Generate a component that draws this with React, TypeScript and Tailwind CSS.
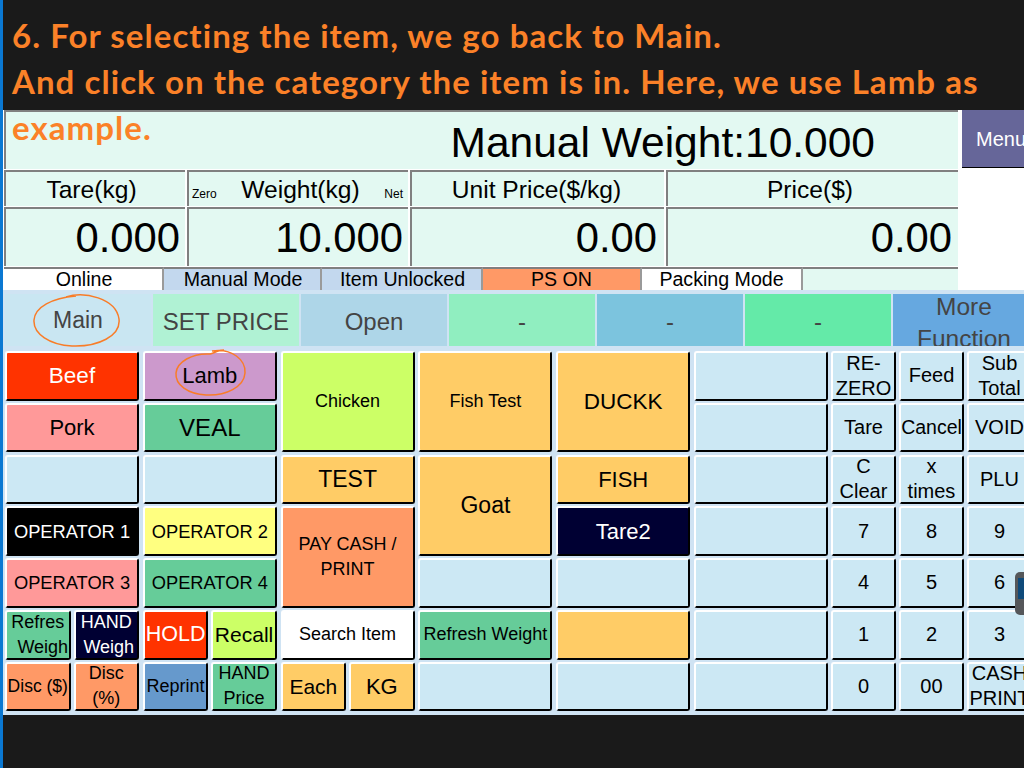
const FONT = "font-['Liberation_Sans',Arial,sans-serif]";

type Key = {
  label?: string;
  color: string;
  size?: string;
  span?: boolean;
};

const blank: Key = { color: 'bg-[#cce8f4]' };

const statusCells = [
  { label: 'Online', className: 'w-[160px] bg-white pl-[2px]' },
  { label: 'Manual Mode', className: 'w-[158px] bg-[#c3d8ee] pl-[2px]' },
  { label: 'Item Unlocked', className: 'w-[161px] bg-[#c3d8ee] pl-[2px]' },
  { label: 'PS ON', className: 'w-[159px] bg-[#ff9966]' },
  { label: 'Packing Mode', className: 'w-[161px] bg-white' },
  { label: '', className: 'w-[155px] bg-[#e3f9f2]' },
];

const functionKeys = [
  { label: 'Main', color: 'bg-[#c9e6f2]', size: 'text-[23px]' },
  { label: 'SET PRICE', color: 'bg-[#b0f2d4]', size: 'text-[24px] pt-[3px]' },
  { label: 'Open', color: 'bg-[#aed6e8]', size: 'text-[24px] pt-[3px]' },
  { label: '-', color: 'bg-[#90eec0]', size: 'text-[24px] pt-[3px]' },
  { label: '-', color: 'bg-[#7cc4de]', size: 'text-[24px] pt-[3px]' },
  { label: '-', color: 'bg-[#64eaa8]', size: 'text-[24px] pt-[3px]' },
];

const numberKeys: Key[] = [
  { label: 'RE-\nZERO', color: 'bg-[#cce8f4]' },
  { label: 'Feed', color: 'bg-[#cce8f4]' },
  { label: 'Sub\nTotal', color: 'bg-[#cce8f4]' },
  { label: 'Tare', color: 'bg-[#cce8f4]' },
  { label: 'Cancel', color: 'bg-[#cce8f4]', size: 'text-[19.5px]' },
  { label: 'VOID', color: 'bg-[#cce8f4]' },
  { label: 'C\nClear', color: 'bg-[#cce8f4]' },
  { label: 'x\ntimes', color: 'bg-[#cce8f4]' },
  { label: 'PLU', color: 'bg-[#cce8f4]' },
  ...['7', '8', '9', '4', '5', '6', '1', '2', '3', '0', '00'].map((label) => ({
    label,
    color: 'bg-[#cce8f4]',
  })),
  { label: 'CASH\nPRINT', color: 'bg-[#cce8f4]' },
];

const PadKey = ({ label, color, size = 'text-[20px]', span }: Key) => (
  <button
    type="button"
    className={`flex min-w-0 items-center justify-center overflow-hidden whitespace-pre rounded-[3px] border-2 border-t-white border-l-white border-r-black border-b-black text-center leading-[25px] ${color} ${size} ${
      span ? 'row-span-2' : ''
    }`}
  >
    {label}
  </button>
);

const KeyPair = ({ keys }: { keys: [Key, Key] }) => (
  <div className="grid grid-cols-2 gap-x-[3px]">
    <PadKey {...keys[0]} />
    <PadKey {...keys[1]} />
  </div>
);

const App = () => {
  return (
    <div className={`relative h-[768px] w-[1024px] overflow-hidden bg-[#1a1a1a] pl-[3px] text-black ${FONT}`}>
      {/* blue edge of the slide */}
      <div className="absolute top-0 bottom-0 left-0 w-[3px] bg-[#0a78d2]" />

      <div className="h-[110px]" />

      <div className="w-[1040px] bg-[#cfe3f3]">
        <div className="bg-white pl-px">
          <div className="flex">
            <div className="flex h-[59px] w-[954px] items-center justify-end border-t-2 border-l-2 border-[#808080] bg-[#e3f9f2] pt-[5px] pr-[83px] text-[42.5px] leading-none">
              Manual Weight:10.000
            </div>
            <div className="ml-[4px] flex h-[58px] w-[80px] items-center border-b border-black bg-[#666699] pl-[14px] text-[20px] text-white">
              Menu
            </div>
          </div>

          <div className="mt-px flex h-[36px] w-[954px] gap-[2px] text-[24.6px]">
            <div className="flex w-[181px] items-center justify-center border-t-2 border-l-2 border-[#808080] bg-[#e3f9f2] pt-[2px] pr-[8px]">Tare(kg)</div>
            <div className="flex w-[221px] items-center justify-between border-t-2 border-l-2 border-[#808080] bg-[#e3f9f2] pt-[2px] pr-[5px] pl-[3px]">
              <span className="pt-[8px] text-[12px]">Zero</span>
              <span>Weight(kg)</span>
              <span className="pt-[8px] text-[12px]">Net</span>
            </div>
            <div className="flex w-[254px] items-center justify-center border-t-2 border-l-2 border-[#808080] bg-[#e3f9f2] pt-[2px] pr-[3px]">Unit Price($/kg)</div>
            <div className="flex flex-1 items-center justify-center border-t-2 border-l-2 border-[#808080] bg-[#e3f9f2] pt-[2px] pr-[6px]">Price($)</div>
          </div>

          <div className="mt-px flex h-[59px] w-[954px] gap-[2px] text-[41.8px]">
            <div className="flex w-[181px] items-center justify-end border-t-2 border-l-2 border-[#808080] bg-[#e3f9f2] pt-[2px] pr-[5px]">0.000</div>
            <div className="flex w-[221px] items-center justify-end border-t-2 border-l-2 border-[#808080] bg-[#e3f9f2] pt-[2px] pr-[5px]">10.000</div>
            <div className="flex w-[254px] items-center justify-end border-t-2 border-l-2 border-[#808080] bg-[#e3f9f2] pt-[2px] pr-[7px]">0.00</div>
            <div className="flex flex-1 items-center justify-end border-t-2 border-l-2 border-[#808080] bg-[#e3f9f2] pt-[2px] pr-[6px]">0.00</div>
          </div>

          <div className="mt-px flex h-[23px] w-[954px] text-[19.6px]">
            {statusCells.map((cell, i) => (
              <div
                key={i}
                className={`flex items-center justify-center border-t-2 border-r-2 border-t-[#808080] border-r-[#9a9a9a] pt-px leading-none last:border-r-0 ${cell.className}`}
              >
                {cell.label}
              </div>
            ))}
          </div>
        </div>

        <div className="flex gap-[2px] pt-[4px] pl-[2px]">
          {functionKeys.map((key, i) => (
            <div
              key={i}
              className={`flex h-[52px] w-[146px] items-center justify-center text-[#444444] ${key.color} ${key.size}`}
            >
              {key.label}
            </div>
          ))}
          <div className="h-[52px] w-[146px] overflow-hidden bg-[#66a8e0] text-center text-[24.5px] leading-[32px] text-[#444444]">
            <div className="-mt-[3px] pr-[4px]">
              More
              <br />
              Function
            </div>
          </div>
        </div>

        <div className="flex gap-[3px] pt-[5px] pb-[4px] pl-[2px]">
          <div className="grid grid-cols-[repeat(6,134px)] grid-rows-[repeat(7,49.6px)] gap-x-[3.8px] gap-y-[2.2px]">
            <PadKey label="Beef" color="bg-[#ff3300] text-white" size="text-[22.5px]" />
            <PadKey label="Lamb" color="bg-[#cc99cc]" size="text-[22px]" />
            <PadKey label="Chicken" color="bg-[#ccff66]" size="text-[18px]" span />
            <PadKey label="Fish Test" color="bg-[#ffcc66]" size="text-[18px]" span />
            <PadKey label="DUCKK" color="bg-[#ffcc66]" size="text-[22.5px]" span />
            <PadKey {...blank} />

            <PadKey label="Pork" color="bg-[#ff9999]" size="text-[22px]" />
            <PadKey label="VEAL" color="bg-[#66cc99]" size="text-[24px]" />
            <PadKey {...blank} />

            <PadKey {...blank} />
            <PadKey {...blank} />
            <PadKey label="TEST" color="bg-[#ffcc66]" size="text-[23px]" />
            <PadKey label="Goat" color="bg-[#ffcc66]" size="text-[23px]" span />
            <PadKey label="FISH" color="bg-[#ffcc66]" size="text-[22px]" />
            <PadKey {...blank} />

            <PadKey label="OPERATOR 1" color="bg-black text-white" size="text-[18.3px]" />
            <PadKey label="OPERATOR 2" color="bg-[#ffff80]" size="text-[18.3px]" />
            <PadKey label={'PAY CASH /\nPRINT'} color="bg-[#ff9966]" size="text-[18px]" span />
            <PadKey label="Tare2" color="bg-[#000033] text-white" size="text-[22px]" />
            <PadKey {...blank} />

            <PadKey label="OPERATOR 3" color="bg-[#ff9999]" size="text-[18.3px]" />
            <PadKey label="OPERATOR 4" color="bg-[#66cc99]" size="text-[18.3px]" />
            <PadKey {...blank} />
            <PadKey {...blank} />
            <PadKey {...blank} />

            <KeyPair
              keys={[
                { label: 'Refres\n  Weigh', color: 'bg-[#66cc99]', size: 'text-[18px]' },
                { label: 'HAND\n Weigh', color: 'bg-[#000033] text-white', size: 'text-[18px]' },
              ]}
            />
            <KeyPair
              keys={[
                { label: 'HOLD', color: 'bg-[#ff3300] text-white', size: 'text-[21.5px]' },
                { label: 'Recall', color: 'bg-[#ccff66]', size: 'text-[21px]' },
              ]}
            />
            <PadKey label="Search Item" color="bg-white" size="text-[18px]" />
            <PadKey label="Refresh Weight" color="bg-[#66cc99]" size="text-[18px]" />
            <PadKey color="bg-[#ffcc66]" />
            <PadKey {...blank} />

            <KeyPair
              keys={[
                { label: 'Disc ($)', color: 'bg-[#ff9966]', size: 'text-[17.5px]' },
                { label: 'Disc\n(%)', color: 'bg-[#ff9966]', size: 'text-[18px]' },
              ]}
            />
            <KeyPair
              keys={[
                { label: 'Reprint', color: 'bg-[#6699cc]', size: 'text-[18px]' },
                { label: 'HAND\nPrice', color: 'bg-[#66cc99]', size: 'text-[18px]' },
              ]}
            />
            <KeyPair
              keys={[
                { label: 'Each', color: 'bg-[#ffcc66]', size: 'text-[21px]' },
                { label: 'KG', color: 'bg-[#ffcc66]', size: 'text-[22px]' },
              ]}
            />
            <PadKey {...blank} />
            <PadKey {...blank} />
            <PadKey {...blank} />
          </div>

          <div className="grid grid-cols-[repeat(3,65px)] grid-rows-[repeat(7,49.6px)] gap-x-[3px] gap-y-[2.2px]">
            {numberKeys.map((key, i) => (
              <PadKey key={i} {...key} />
            ))}
          </div>
        </div>
      </div>

      {/* caption laid over the screenshot */}
      <div className="absolute top-[12px] left-[12px] w-[1000px] font-['Lato',sans-serif] text-[33px] leading-[46px] font-bold tracking-[1.06px] text-[#fb8128]">
        6. For selecting the item, we go back to Main.
        <br />
        And click on the category the item is in. Here, we use Lamb as
        <br />
        example.
      </div>

      {/* hand drawn circles */}
      <svg className="absolute top-[292px] left-[30px]" width="94" height="58" viewBox="0 0 94 58" fill="none" stroke="#f97c28" strokeWidth="1.5">
        <path d="M36 5 C54 -1 86 6 89 27 C91 44 68 55 42 54 C20 53 3 42 4 28 C5 15 22 6 46 4" />
      </svg>
      <svg className="absolute top-[348px] left-[172px]" width="78" height="52" viewBox="0 0 78 52" fill="none" stroke="#f97c28" strokeWidth="1.5">
        <path d="M40 3 C60 0 74 12 73 25 C72 39 54 48 34 47 C16 46 3 37 4 25 C5 14 20 5 38 6 C44 4 48 2 52 2" />
      </svg>

      {/* floating widget cut off by the right edge */}
      <div className="absolute top-[572px] right-0 flex h-[43px] w-[9px] items-start rounded-l-[5px] bg-[#55575a] pt-[6px] pl-[3px]">
        <div className="h-[21px] w-[6px] bg-[#0f4a7a]" />
      </div>
    </div>
  );
};

export default App;
